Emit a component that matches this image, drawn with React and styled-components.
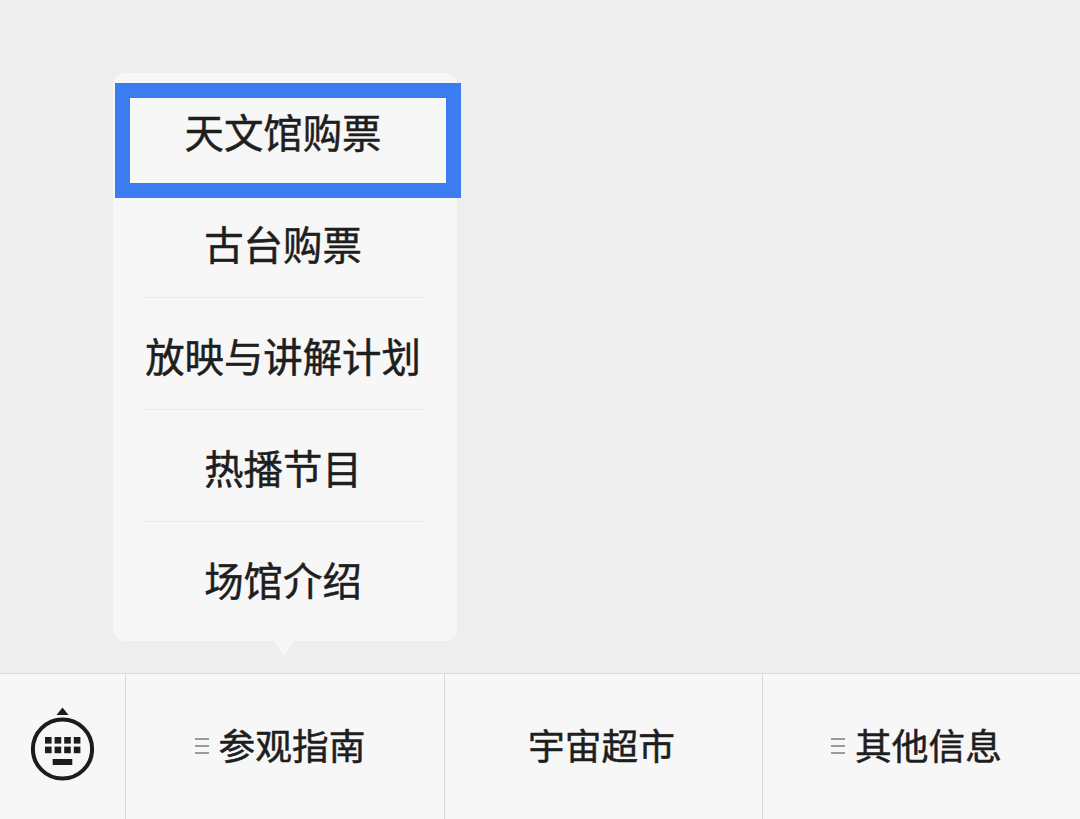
import React from 'react';
import styled, { createGlobalStyle } from 'styled-components';

const menuItems = ['天文馆购票', '古台购票', '放映与讲解计划', '热播节目', '场馆介绍'];

const tabs = [
  { label: '参观指南', hasMenu: true },
  { label: '宇宙超市', hasMenu: false },
  { label: '其他信息', hasMenu: true },
];

function KeyboardIcon() {
  const keys = [45, 54.6, 64.2, 73.8];
  return (
    <svg width="70" height="78" viewBox="27 704 70 78">
      <path d="M62.5 706.5 L68.5 714 L56.5 714 Z" fill="#1c1c1c" />
      <circle cx="62.5" cy="748" r="29.6" fill="none" stroke="#1c1c1c" strokeWidth="4" />
      {keys.map((x) => (
        <rect key={`a${x}`} x={x} y="736" width="6.6" height="6.6" fill="#1c1c1c" />
      ))}
      {keys.map((x) => (
        <rect key={`b${x}`} x={x} y="745.6" width="6.6" height="6.6" fill="#1c1c1c" />
      ))}
      <rect x="52.7" y="758" width="19.6" height="6" fill="#1c1c1c" />
    </svg>
  );
}

export default function App() {
  return (
    <Page>
      <GlobalStyle />
      <Content>
        <Popup>
          <Highlight />
          {menuItems.map((item, i) => (
            <MenuItem key={item} $divider={i > 0 && i < menuItems.length - 1}>
              {item}
            </MenuItem>
          ))}
        </Popup>
      </Content>
      <Bar>
        <KeyboardCell>
          <KeyboardIcon />
        </KeyboardCell>
        {tabs.map((tab) => (
          <Tab key={tab.label} $hasMenu={tab.hasMenu}>
            {tab.hasMenu && <MenuMark />}
            {tab.label}
          </Tab>
        ))}
      </Bar>
    </Page>
  );
}

const GlobalStyle = createGlobalStyle`
  html, body {
    margin: 0;
    padding: 0;
    background: #eeeeee;
  }
  body {
    overflow: hidden;
  }
`;

const Page = styled.div`
  height: 819px;
  display: flex;
  flex-direction: column;
  background: #eeeeee;
  color: #1e1e1e;
  font-family: "Noto Sans CJK SC", "Noto Sans", sans-serif;
`;

const Content = styled.div`
  flex: 1;
  padding: 73px 0 0 113px;
`;

const Popup = styled.div`
  position: relative;
  box-sizing: border-box;
  width: 344px;
  height: 568px;
  padding: 1px 4px 0 0;
  background: #f7f7f7;
  border-radius: 12px;

  &::after {
    content: '';
    position: absolute;
    left: 161px;
    bottom: -15px;
    border-style: solid;
    border-width: 15px 10px 0 10px;
    border-color: #f7f7f7 transparent transparent transparent;
  }
`;

const Highlight = styled.div`
  position: absolute;
  left: 2px;
  top: 10px;
  box-sizing: border-box;
  width: 346px;
  height: 115px;
  border: 15px solid #3c7cf1;
`;

const MenuItem = styled.div`
  position: relative;
  box-sizing: border-box;
  height: 112px;
  padding-top: 2px;
  display: flex;
  align-items: center;
  justify-content: center;
  font-size: 39.4px;
  font-weight: 400;
  -webkit-text-stroke: 0.5px #1e1e1e;
  line-height: 1;

  &::after {
    content: '';
    display: ${(p) => (p.$divider ? 'block' : 'none')};
    position: absolute;
    left: 31px;
    right: 29px;
    bottom: 0;
    height: 1px;
    background: #e8e8e8;
  }
`;

const Bar = styled.div`
  box-sizing: border-box;
  height: 146px;
  display: grid;
  grid-template-columns: 126px 319px 318px 317px;
  background: #f7f7f7;
  border-top: 1px solid #dcdcdc;
`;

const KeyboardCell = styled.div`
  display: flex;
  align-items: center;
  justify-content: center;
  padding: 0 1px 5px 0;
  border-right: 1px solid #d9d9d9;
`;

const Tab = styled.div`
  display: flex;
  align-items: center;
  justify-content: center;
  gap: 10px;
  padding: 0 ${(p) => (p.$hasMenu ? '10px' : '4px')} 4px 0;
  font-size: 36.7px;
  font-weight: 400;
  -webkit-text-stroke: 0.5px #1e1e1e;
  line-height: 1;
  border-right: 1px solid #d9d9d9;

  &:last-child {
    border-right: none;
  }
`;

const MenuMark = styled.span`
  width: 14px;
  height: 16px;
  margin-top: 2px;
  background: linear-gradient(#9a9a9a, #9a9a9a) 0 0 / 100% 2px no-repeat,
    linear-gradient(#9a9a9a, #9a9a9a) 0 7px / 100% 2px no-repeat,
    linear-gradient(#9a9a9a, #9a9a9a) 0 14px / 100% 2px no-repeat;
`;
